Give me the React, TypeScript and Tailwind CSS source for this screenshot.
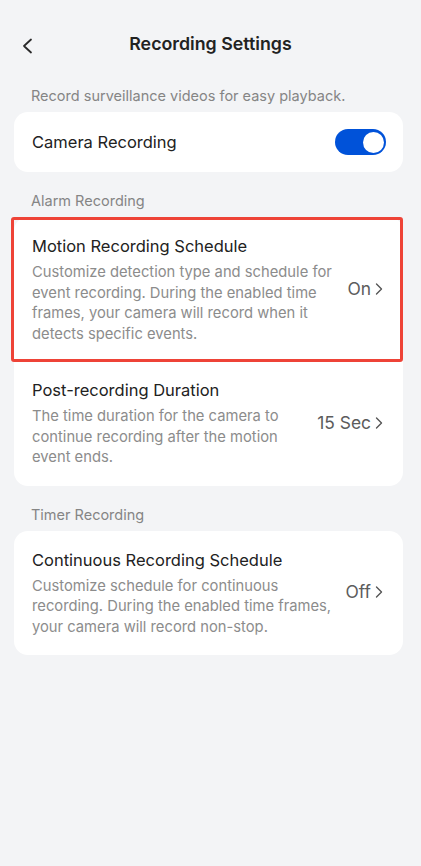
import React, { useState } from "react";

interface RowProps {
  title: string;
  desc: string;
  value: string;
}

function Chevron() {
  return (
    <svg width="8" height="12" viewBox="0 0 8 12" fill="none" aria-hidden="true">
      <path d="M1.5 1L6.5 6L1.5 11" stroke="#555" strokeWidth="1.4" strokeLinecap="round" strokeLinejoin="round" />
    </svg>
  );
}

function SettingRow({ title, desc, value }: RowProps) {
  return (
    <div className="flex items-center gap-3 pl-[18px] pr-[20px] pt-[17px] pb-[18px]">
      <div className="flex-1">
        <div className="text-[16.5px] leading-[24px] text-[#222]">{title}</div>
        <div className="mt-[4px] text-[14.75px] leading-[20.5px] text-[#8c8c8c]">{desc}</div>
      </div>
      <div className="flex items-center gap-[4px] text-[17.4px] text-[#5c5c5c]">
        <span>{value}</span>
        <Chevron />
      </div>
    </div>
  );
}

function SectionLabel({ children }: { children: React.ReactNode }) {
  return <div className="px-[31px] pb-[6px] text-[14.5px] leading-[20px] text-[#858585]">{children}</div>;
}

export default function App() {
  const [recording, setRecording] = useState(true);

  return (
    <div
      className="min-h-[866px] w-[421px] bg-[#f3f4f6]"
      style={{ fontFamily: "Inter, 'Noto Sans', sans-serif" }}
    >
      {/* Header */}
      <div className="relative flex h-[88px] items-center justify-center">
        <button className="absolute left-[19px] top-[36px] p-[2px]" aria-label="Back">
          <svg width="12" height="16" viewBox="0 0 12 16" fill="none" aria-hidden="true">
            <path d="M10 1.5L3 8L10 14.5" stroke="#2a2a2a" strokeWidth="1.8" strokeLinecap="round" strokeLinejoin="round" />
          </svg>
        </button>
        <h1 className="text-[17.8px] font-semibold text-[#222]">Recording Settings</h1>
      </div>

      <div className="-mt-[2px]">
        <SectionLabel>Record surveillance videos for easy playback.</SectionLabel>
      </div>

      <div className="ml-[14px] mr-[18px] flex h-[60px] items-center justify-between rounded-[14px] bg-white pl-[18px] pr-[17px]">
        <span className="text-[16.5px] text-[#222]">Camera Recording</span>
        <button
          onClick={() => setRecording(!recording)}
          className={`flex h-[26px] w-[51px] items-center rounded-full p-[2.5px] ${recording ? "justify-end bg-[#0052d9]" : "justify-start bg-[#d9d9d9]"}`}
          aria-pressed={recording}
        >
          <span className="h-[21px] w-[21px] rounded-full bg-white" />
        </button>
      </div>

      <div className="mt-[19px]">
        <SectionLabel>Alarm Recording</SectionLabel>
      </div>

      <div className="ml-[14px] mr-[18px] rounded-[14px] bg-white">
        <div className="relative">
          <SettingRow
            title="Motion Recording Schedule"
            desc="Customize detection type and schedule for event recording. During the enabled time frames, your camera will record when it detects specific events."
            value="On"
          />
          <div className="pointer-events-none absolute -left-[3px] top-0 right-0 bottom-0 rounded-[3px] border-[3px] border-[#ee4337]" />
        </div>
        <div className="-mt-[1px]">
          <SettingRow
            title="Post-recording Duration"
            desc="The time duration for the camera to continue recording after the motion event ends."
            value="15 Sec"
          />
        </div>
      </div>

      <div className="mt-[19px]">
        <SectionLabel>Timer Recording</SectionLabel>
      </div>

      <div className="ml-[14px] mr-[18px] rounded-[14px] bg-white">
        <SettingRow
          title="Continuous Recording Schedule"
          desc="Customize schedule for continuous recording. During the enabled time frames, your camera will record non-stop."
          value="Off"
        />
      </div>
    </div>
  );
}
